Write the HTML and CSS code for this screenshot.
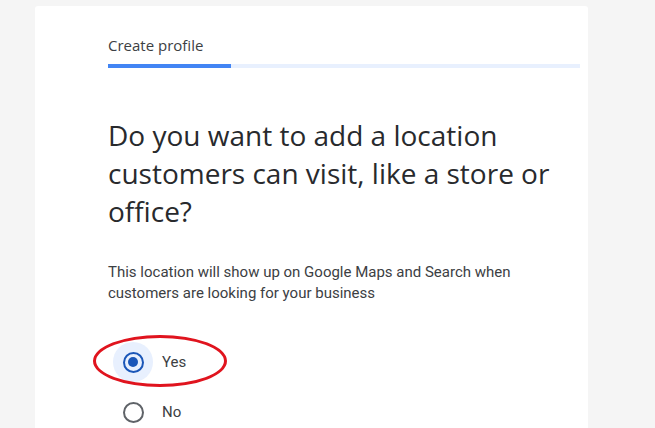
FILE: index.html
```html
<!DOCTYPE html>
<html lang="en">
<head>
    <meta charset="UTF-8">
    <meta name="viewport" content="width=device-width, initial-scale=1.0">
    <title>Create profile</title>
    <link rel="stylesheet" href="styles.css">
</head>
<body>

    <div class="card">
        <div class="step">Create profile</div>
        <div class="progress"><div class="progress-fill"></div></div>

        <h1>Do you want to add a location customers can visit, like a store or office?</h1>

        <p class="hint">This location will show up on Google Maps and Search when customers are looking for your business</p>

        <div class="options">
            <label class="option">
                <span class="radio checked"><span class="dot"></span></span>
                <span class="label">Yes</span>
                <!-- red mark around the chosen answer -->
                <span class="mark"></span>
            </label>
            <label class="option">
                <span class="radio"></span>
                <span class="label">No</span>
            </label>
        </div>
    </div>

</body>
</html>
```

FILE: styles.css
```css
body {
    margin: 0;
    background: #f5f5f5;
    font-family: Roboto, "Liberation Sans", Arial, sans-serif;
    color: #202124;
    overflow: hidden;
}

.card {
    background: white;
    margin: 6px 0 0 35px;
    width: 553px;
    height: 440px;
    border-radius: 3px;
    box-sizing: border-box;
    padding: 30px 8px 0 73px;
}

.step {
    font-family: "Open Sans", Roboto, sans-serif;
    font-size: 15px;
    color: #3c4043;
    line-height: 18px;
}

.progress {
    margin-top: 10px;
    height: 4px;
    background: #e8f0fe;
}

.progress-fill {
    width: 123px;
    height: 4px;
    background: #4285f4;
}

h1 {
    font-family: "Open Sans", Roboto, sans-serif;
    font-weight: 400;
    font-size: 28px;
    line-height: 38px;
    margin: 48px 0 0 0;
    color: #282a2d;
}

.hint {
    font-size: 15px;
    line-height: 21px;
    color: #3c4043;
    margin: 32px 0 0 0;
    max-width: 440px;
}

.options {
    margin-top: 38px;
    margin-left: 5px;
}

.option {
    position: relative;
    display: flex;
    align-items: center;
    height: 40px;
    margin-bottom: 10px;
}

.radio {
    width: 40px;
    height: 40px;
    border-radius: 50%;
    display: flex;
    align-items: center;
    justify-content: center;
    position: relative;
}

.radio::before {
    content: "";
    position: absolute;
    width: 17px;
    height: 17px;
    border: 2px solid #5f6368;
    border-radius: 50%;
}

.radio.checked {
    background: #e8f0fe;
}

.radio.checked::before {
    border-color: #1a56b8;
}

.dot {
    width: 10px;
    height: 10px;
    border-radius: 50%;
    background: #1a56b8;
}

.label {
    margin-left: 9px;
    font-size: 15px;
    color: #3c4043;
}

.mark {
    position: absolute;
    left: -20px;
    top: -7px;
    width: 128px;
    height: 46px;
    border: 3px solid #e0141e;
    border-radius: 50%;
}
```
